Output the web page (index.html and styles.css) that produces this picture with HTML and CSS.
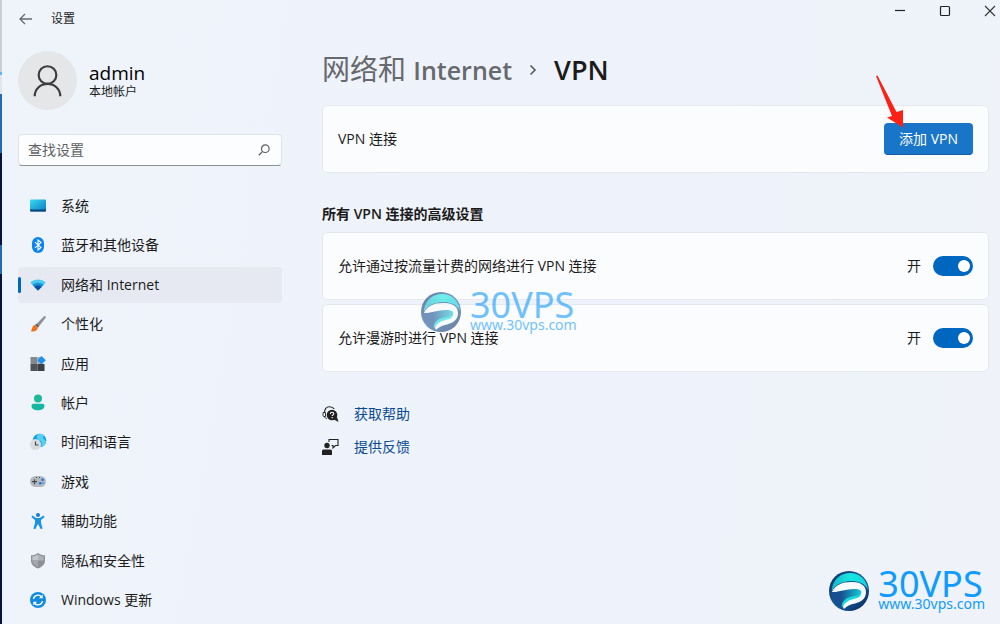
FILE: index.html
```html
<!DOCTYPE html>
<html lang="zh-CN">
<head>
<meta charset="utf-8">
<title>设置</title>
<link rel="stylesheet" href="styles.css">
</head>
<body>
<svg class="defs" aria-hidden="true">
  <defs>
    <linearGradient id="sea" x1="0" y1="0" x2="1" y2="1"><stop offset="0" stop-color="#0a2f66"/><stop offset=".5" stop-color="#1b5a9b"/><stop offset="1" stop-color="#082a5c"/></linearGradient>
    <linearGradient id="foam" x1="0" y1="0" x2="1" y2="0"><stop offset="0" stop-color="#19b7c9"/><stop offset=".5" stop-color="#17e6e0"/><stop offset="1" stop-color="#12d3dc"/></linearGradient>
    <linearGradient id="current" x1="0" y1="0" x2="1" y2="0"><stop offset=".3" stop-color="#184f90"/><stop offset="1" stop-color="#19c9d9"/></linearGradient>
    <symbol id="brand" viewBox="0 0 40 40">
      <circle cx="20" cy="20" r="20" fill="url(#sea)"/>
      <path d="M3 17C5 7 13 2 21 2c9 0 17 6 18 17C36 12 29 10 22 10 12 10.500 6 14 3 20z" fill="url(#foam)"/>
      <path d="M3 21C6 14 13 11 22 11c10-.5 15 4 15 10 0 7-5 10-11 11.500-5 1-8 2.500-11 5.500C12 34 17 29 24 27z" fill="#f5fbff"/>
      <path d="M3 21c6 .5 14-3 22-3 6 0 8.500 2 7 4.500C29 27 20 26.500 16 30c-3 2.500-3 5-2 8.500C8 36 3 29 3 21z" fill="url(#current)"/>
      <path d="M13 37c-1-5 2-9 8-11 4-1.200 8-1 11-3.500-.5 4.500-5 4.500-9 6C18 30 14.500 32.500 13 37z" fill="#17d9dc"/>
    </symbol>
  </defs>
</svg>
<div class="screen">
  <div class="desktop-edge"></div>
  <div class="window">
    <header class="titlebar">
      <button class="back" aria-label="返回"><svg width="14" height="12" viewBox="0 0 14 12"><path d="M6 1L1 6l5 5M1 6h12" fill="none" stroke="#666a70" stroke-width="1.3"/></svg></button>
      <span class="app-name">设置</span>
      <div class="window-controls">
        <button aria-label="最小化"><svg width="12" height="12" viewBox="0 0 12 12"><path d="M1 5.500h10" stroke="#222" stroke-width="1.200"/></svg></button>
        <button aria-label="最大化"><svg width="12" height="12" viewBox="0 0 12 12"><rect x="1.500" y="1.500" width="9" height="9" rx="1" fill="none" stroke="#222" stroke-width="1.200"/></svg></button>
        <button aria-label="关闭"><svg width="12" height="12" viewBox="0 0 12 12"><path d="M1 1l10 10M11 1L1 11" stroke="#333" stroke-width="1.100"/></svg></button>
      </div>
    </header>
    <div class="content">
      <aside class="sidebar">
        <div class="account">
          <svg class="avatar" viewBox="0 0 60 60"><circle cx="30" cy="30" r="30" fill="#e5e6e8"/><g fill="none" stroke="#3b3c3f" stroke-width="2.200"><circle cx="30" cy="24.500" r="9"/><path d="M17 46c0-7 5.500-12.500 13-12.500S43 39 43 46"/></g></svg>
          <div class="account-text">
            <div class="user">admin</div>
            <div class="kind">本地帐户</div>
          </div>
        </div>
        <div class="search">
          <input type="text" placeholder="查找设置" aria-label="查找设置">
          <svg width="12" height="12" viewBox="0 0 12 12"><circle cx="7.300" cy="4.700" r="3.800" fill="none" stroke="#5b5d61" stroke-width="1.200"/><path d="M4.600 7.400L.8 11.200" stroke="#5b5d61" stroke-width="1.300"/></svg>
        </div>
        <nav class="nav">
          <a href="#"><svg viewBox="0 0 18 18"><defs><linearGradient id="scr" x1="0" y1="0" x2="1" y2="1"><stop offset="0" stop-color="#37dcf0"/><stop offset="1" stop-color="#0a78c4"/></linearGradient></defs><rect x="1" y="2.500" width="16" height="12" rx="1" fill="url(#scr)"/><path d="M1 12.500h16v1a1 1 0 0 1-1 1H2a1 1 0 0 1-1-1z" fill="#0b4478"/></svg>系统</a>
          <a href="#"><svg viewBox="0 0 18 18"><rect x="3" y="1" width="12" height="16" rx="6" fill="#0a84f0"/><path d="M6 6.200l6 5.300L9 14V4l3 2.500-6 5.300" fill="none" stroke="#fff" stroke-width="1.100"/></svg>蓝牙和其他设备</a>
          <a href="#" class="current" aria-current="page"><svg viewBox="0 0 18 18"><path d="M9 14.500L1.300 6.800C5.500 2.500 12.500 2.500 16.700 6.800z" fill="#4cc9ee"/><path d="M9 14.500L3.500 9c3-3 8-3 11 0z" fill="#1b8fd6"/><path d="M9 14.500l-3.600-3.600c2-1.800 5.200-1.800 7.200 0z" fill="#0b4f9e"/></svg>网络和 Internet</a>
          <a href="#"><svg viewBox="0 0 18 18"><path d="M15 1.200c1-.6 2.200.4 1.700 1.500L9 12.500 6.500 10z" fill="#8d9196"/><path d="M7.500 8.800L9.800 11 9 12.500 6 10z" fill="#5d6166"/><path d="M6 10l2.800 2.500C8.500 16 5 17.500 1.500 16c1.800-.7 1.300-2.300 2-4 .5-1.200 1.400-1.900 2.500-2z" fill="#f2711c"/></svg>个性化</a>
          <a href="#"><svg viewBox="0 0 18 18"><rect x="1.500" y="2" width="7" height="7" fill="#85888c"/><rect x="1.500" y="9" width="7" height="7" fill="#505358"/><rect x="8.500" y="9" width="7" height="7" fill="#3c3f44"/><rect x="8.500" y="2" width="5" height="7" fill="#a9b1ba"/><path d="M12.500 1l4.300 4.300-4.300 4.300-4.300-4.300z" fill="#1e90f0"/></svg>应用</a>
          <a href="#"><svg viewBox="0 0 18 18"><circle cx="9" cy="4.500" r="4" fill="#1fb89b"/><path d="M4.500 9.800h9a2 2 0 0 1 2 2c0 3-2.700 4.500-6.500 4.500s-6.500-1.500-6.500-4.500a2 2 0 0 1 2-2z" fill="#14b8a0"/></svg>帐户</a>
          <a href="#"><svg viewBox="0 0 18 18"><circle cx="10.500" cy="7.500" r="6.800" fill="#159ce0"/><path d="M9 1c-2 2-2 5 1 6s3 4 2 7c3-.6 5-3 5-6l-3-3 1-3C13 1 11 .5 9 1z" fill="#55d0f0"/><circle cx="6.500" cy="11.500" r="5.500" fill="#d9dcdf"/><path d="M6.500 8.500v3.500h3" fill="none" stroke="#44484d" stroke-width="1.200"/></svg>时间和语言</a>
          <a href="#"><svg viewBox="0 0 18 18"><rect x="1" y="3" width="16" height="11" rx="5.500" fill="#b5b9be"/><path d="M3 8.700h5M5.500 6.200v5M7 4.500h1M10 4.500h1" stroke="#44484d" stroke-width="1.200"/><circle cx="13.500" cy="6.800" r="1.300" fill="#1476d8"/><circle cx="11.200" cy="10.300" r="1.300" fill="#1476d8"/><circle cx="14" cy="10" r=".8" fill="#1476d8"/></svg>游戏</a>
          <a href="#"><svg viewBox="0 0 18 18"><circle cx="9" cy="3" r="2" fill="#147fd0"/><path d="M3.500 3.500L7.200 6h3.600l3.700-2.500 1.200 1.400L12 8v3l1.600 5.500-1.800.7L9 12l-2.800 5.200-1.800-.7L6 11V8L2.300 4.900z" fill="#1a93e4"/></svg>辅助功能</a>
          <a href="#"><svg viewBox="0 0 18 18"><path d="M9 1c2 1.700 4.500 2.300 7 2.300V8.500c0 4-3 6.500-7 8-4-1.500-7-4-7-8V3.300c2.500 0 5-.6 7-2.300z" fill="#8d9094"/><path d="M9 2.500c1.800 1.200 3.700 1.800 5.700 1.900v4.100H9z" fill="#aeb1b5"/><path d="M9 2.500C7.200 3.700 5.300 4.300 3.300 4.400v4.100H9z" fill="#c3c5c8"/><path d="M3.300 8.500H9V15C5.500 13.500 3.300 11.500 3.300 8.500z" fill="#a3a6aa"/></svg>隐私和安全性</a>
          <a href="#"><svg viewBox="0 0 18 18"><circle cx="9" cy="9" r="8" fill="#138bdc"/><path d="M4.500 8a4.600 4.600 0 0 1 8-2.300M13.500 10a4.600 4.600 0 0 1-8 2.300" fill="none" stroke="#fff" stroke-width="1.400"/><path d="M13.700 3.500v3.700H10zM4.300 14.500v-3.700H8z" fill="#fff"/></svg>Windows 更新</a>
        </nav>
      </aside>
      <main class="main">
        <h1 class="crumbs">
          <a href="#">网络和 <span class="latin">Internet</span></a>
          <svg width="8" height="12" viewBox="0 0 8 12"><path d="M1.500 1.500L6 6l-4.500 4.500" fill="none" stroke="#55585c" stroke-width="1.600"/></svg>
          <span class="here">VPN</span>
        </h1>
        <section class="card">
          <span class="card-label">VPN 连接</span>
          <div class="add-wrap">
            <button class="add">添加 VPN</button>
            <svg class="pointer" width="30" height="54" viewBox="0 0 30 54"><path d="M1 1l1.500-.5L21.500 37l6.500-2v17.500L12 42.500l5-1.500z" fill="#fb2116"/></svg>
          </div>
        </section>
        <h2 class="section-title">所有 VPN 连接的高级设置</h2>
        <div class="options">
          <section class="card">
            <span class="card-label" id="metered">允许通过按流量计费的网络进行 VPN 连接</span>
            <label class="switch">开<input type="checkbox" role="switch" checked aria-labelledby="metered"></label>
          </section>
          <section class="card">
            <span class="card-label" id="roaming">允许漫游时进行 VPN 连接</span>
            <label class="switch">开<input type="checkbox" role="switch" checked aria-labelledby="roaming"></label>
          </section>
          <div class="watermark center">
            <svg width="40" height="40"><use href="#brand"/></svg>
            <div><div class="wm-name">30VPS</div><div class="wm-url">www.30vps.com</div></div>
          </div>
        </div>
        <div class="links">
          <a href="#"><svg viewBox="0 0 18 18"><path d="M2.500 8C2.500 4 4.500 1.700 7.500 1.700c2.300 0 3.800.8 4.800 2.300" fill="none" stroke="#222" stroke-width="1.100"/><path d="M1 7.500h2.500v4H2a1 1 0 0 1-1-1zM2.500 11.500c.5 1.500 1.200 2 2.500 2" fill="none" stroke="#222" stroke-width=".9"/><circle cx="10" cy="10" r="5.300" fill="#222"/><path d="M12 14.500l4.500 2.500-1.500-5z" fill="#222"/><path d="M8.400 8.900c0-2.300 3.400-2.200 3.400-.2 0 1.200-1.600 1.200-1.600 2.400M10.200 12v1.200" fill="none" stroke="#fff" stroke-width="1.100"/></svg>获取帮助</a>
          <a href="#"><svg viewBox="0 0 18 18"><circle cx="5" cy="7.500" r="2.700" fill="#222"/><path d="M1.500 11.500h7a1.500 1.500 0 0 1 1.500 1.500v4H0v-4a1.500 1.500 0 0 1 1.500-1.500z" fill="#222"/><path d="M7 4V1.500h9v6h-2.500L11 10V7.500H9.500" fill="none" stroke="#222" stroke-width="1.100"/></svg>提供反馈</a>
        </div>
      </main>
    </div>
  </div>
  <div class="watermark corner">
    <svg width="40" height="40"><use href="#brand"/></svg>
    <div><div class="wm-name">30VPS</div><div class="wm-url">www.30vps.com</div></div>
  </div>
</div>
</body>
</html>
```
FILE: styles.css
```css
* { box-sizing: border-box; }
body {
  margin: 0;
  font: 14px/20px "Open Sans", "Noto Sans CJK SC", sans-serif;
  color: #1b1b1c;
}
button { border: 0; background: none; padding: 0; font: inherit; }
a { color: inherit; text-decoration: none; }
svg { flex: none; display: block; }
.defs { position: absolute; width: 0; height: 0; }
.screen { position: relative; display: flex; min-height: 100vh; }
.desktop-edge {
  width: 2px;
  background: linear-gradient(#c9ced6 0 72px, #5fb4ee 72px 75px, #dfe5ec 75px 94px, #1f6cb5 94px 153px, #06123f 153px 245px, #1f6cb5 245px 274px, #06123f 274px);
}
.window {
  flex: 1;
  display: flex;
  flex-direction: column;
  background: linear-gradient(100deg, #eff4fb, #eef2fa 60%, #eff3f9);
}
.titlebar { display: flex; align-items: center; height: 38px; padding-left: 17px; }
.back { padding-right: 18px; }
.app-name { font-size: 12px; }
.window-controls { display: flex; gap: 33px; margin: 0 4px 16px auto; }
.content { flex: 1; display: flex; gap: 40px; padding: 0 11px 0 16px; }
.sidebar { width: 264px; display: flex; flex-direction: column; padding: 13px 0 6px; }
.account { display: flex; align-items: center; gap: 12px; }
.avatar { width: 59px; height: 59px; }
.user { font-size: 19px; line-height: 22px; color: #000; }
.kind { font-size: 12px; line-height: 16px; }
.search {
  display: flex;
  align-items: center;
  margin: 24px 0 22px;
  height: 32px;
  padding: 0 11px 0 9px;
  background: #fcfdfe;
  border: 1px solid #dfe3e8;
  border-bottom-color: #8b9092;
  border-radius: 4px;
}
.search input {
  flex: 1;
  min-width: 0;
  border: 0;
  padding: 0;
  background: none;
  font: inherit;
  outline: 0;
}
.search input::placeholder { color: #5f6165; opacity: 1; }
.nav { flex: 1; display: flex; flex-direction: column; justify-content: space-between; }
.nav a {
  position: relative;
  display: flex;
  align-items: center;
  gap: 14px;
  height: 36px;
  padding-left: 11px;
  border-radius: 4px;
}
.nav svg { width: 18px; height: 18px; }
.nav .current { background: #e6e9f1; }
.nav .current::before {
  content: "";
  position: absolute;
  left: 0;
  top: 10px;
  width: 3px;
  height: 16px;
  border-radius: 2px;
  background: #0067c0;
}
.main { flex: 1; padding-top: 12px; }
.crumbs {
  display: flex;
  align-items: center;
  gap: 17px;
  margin: 0 0 16px;
  line-height: 38px;
  font-weight: 400;
}
.crumbs a { color: #66696d; font-size: 28px; }
.latin { font-size: 25px; font-weight: 600; }
.here { font-size: 27px; font-weight: 600; }
.card {
  display: flex;
  align-items: center;
  justify-content: space-between;
  min-height: 68px;
  padding: 0 15px;
  background: #fbfcfe;
  border: 1px solid #e5e8ee;
  border-radius: 5px;
}
.add-wrap { position: relative; }
.add {
  display: block;
  height: 32px;
  padding: 0 15px;
  border-radius: 4px;
  border-bottom: 1px solid #125ca3;
  background: #1975c8;
  color: #fff;
}
.pointer { position: absolute; left: -9px; top: -48px; }
.section-title { margin: 31px 0 8px; font-size: 14px; line-height: 20px; font-weight: 600; }
.options { position: relative; display: grid; gap: 4px; }
.switch { display: flex; align-items: center; gap: 12px; }
.switch input {
  appearance: none;
  display: flex;
  align-items: center;
  justify-content: flex-end;
  width: 40px;
  height: 20px;
  margin: 0;
  padding-right: 3px;
  border-radius: 10px;
  background: #0067c0;
}
.switch input::before {
  content: "";
  width: 12px;
  height: 12px;
  border-radius: 50%;
  background: #fff;
}
.links { display: grid; justify-items: start; gap: 13px; margin-top: 32px; color: #0a4a95; }
.links a { display: flex; align-items: center; gap: 14px; }
.links svg { width: 18px; height: 18px; }
.watermark {
  position: absolute;
  display: flex;
  align-items: center;
  gap: 9px;
  font-family: "Noto Sans", sans-serif;
  color: #0f9bff;
  pointer-events: none;
}
.wm-name { font-size: 36px; line-height: 26px; }
.wm-url { font-size: 14px; line-height: 14px; }
.center { left: 99px; top: 60px; opacity: .6; }
.corner { right: 15px; bottom: 13px; }
```
